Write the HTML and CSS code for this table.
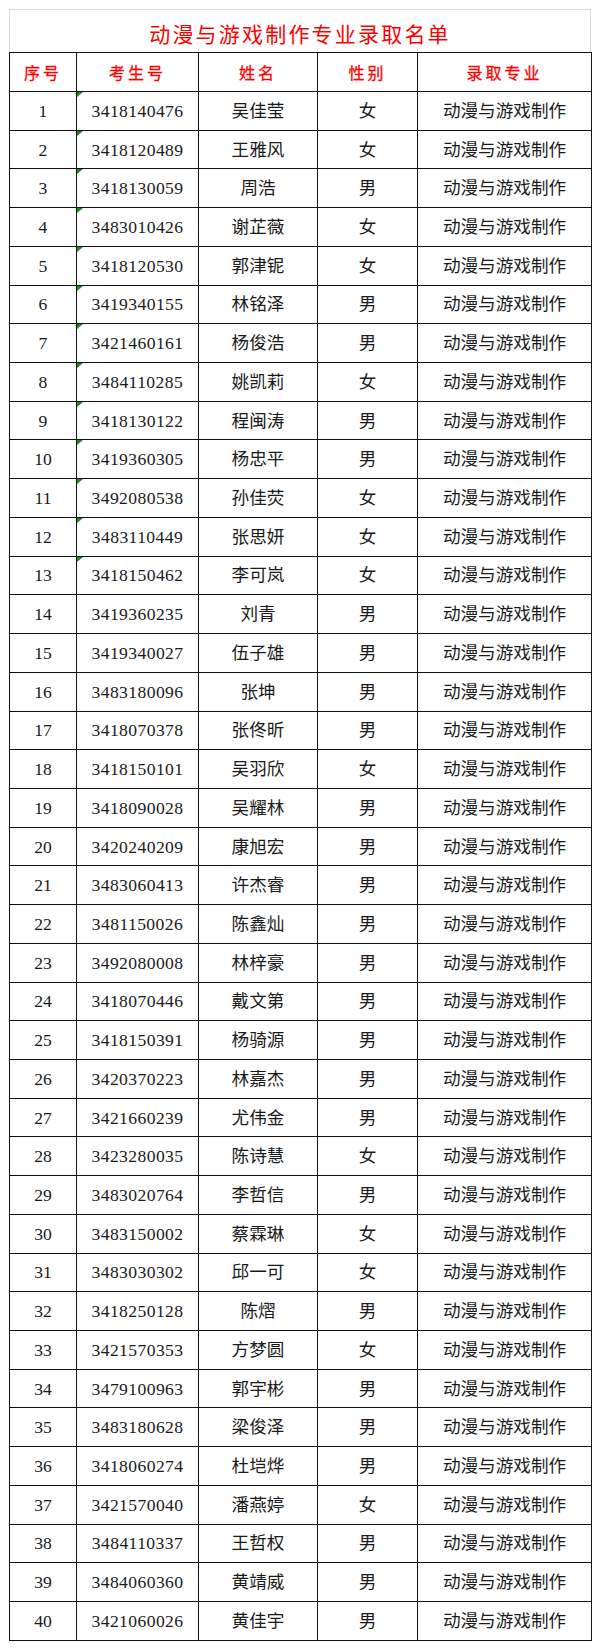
FILE: index.html
```html
<!DOCTYPE html>
<html lang="zh-CN">
<head>
<meta charset="utf-8">
<title>动漫与游戏制作专业录取名单</title>
<link rel="stylesheet" href="styles.css">
</head>
<body>
<div class="sheet">
  <div class="title">动漫与游戏制作专业录取名单</div>
  <table class="list">
    <colgroup>
      <col class="c1"><col class="c2"><col class="c3"><col class="c4"><col class="c5">
    </colgroup>
    <thead>
      <tr class="head"><th>序号</th><th>考生号</th><th>姓名</th><th>性别</th><th>录取专业</th></tr>
    </thead>
    <tbody>
      <tr><td>1</td><td class="num mark">3418140476</td><td>吴佳莹</td><td>女</td><td>动漫与游戏制作</td></tr>
      <tr><td>2</td><td class="num mark">3418120489</td><td>王雅风</td><td>女</td><td>动漫与游戏制作</td></tr>
      <tr><td>3</td><td class="num mark">3418130059</td><td>周浩</td><td>男</td><td>动漫与游戏制作</td></tr>
      <tr><td>4</td><td class="num mark">3483010426</td><td>谢芷薇</td><td>女</td><td>动漫与游戏制作</td></tr>
      <tr><td>5</td><td class="num mark">3418120530</td><td>郭津铌</td><td>女</td><td>动漫与游戏制作</td></tr>
      <tr><td>6</td><td class="num mark">3419340155</td><td>林铭泽</td><td>男</td><td>动漫与游戏制作</td></tr>
      <tr><td>7</td><td class="num mark">3421460161</td><td>杨俊浩</td><td>男</td><td>动漫与游戏制作</td></tr>
      <tr><td>8</td><td class="num mark">3484110285</td><td>姚凯莉</td><td>女</td><td>动漫与游戏制作</td></tr>
      <tr><td>9</td><td class="num mark">3418130122</td><td>程闽涛</td><td>男</td><td>动漫与游戏制作</td></tr>
      <tr><td>10</td><td class="num mark">3419360305</td><td>杨忠平</td><td>男</td><td>动漫与游戏制作</td></tr>
      <tr><td>11</td><td class="num mark">3492080538</td><td>孙佳荧</td><td>女</td><td>动漫与游戏制作</td></tr>
      <tr><td>12</td><td class="num mark">3483110449</td><td>张思妍</td><td>女</td><td>动漫与游戏制作</td></tr>
      <tr><td>13</td><td class="num mark">3418150462</td><td>李可岚</td><td>女</td><td>动漫与游戏制作</td></tr>
      <tr><td>14</td><td class="num">3419360235</td><td>刘青</td><td>男</td><td>动漫与游戏制作</td></tr>
      <tr><td>15</td><td class="num">3419340027</td><td>伍子雄</td><td>男</td><td>动漫与游戏制作</td></tr>
      <tr><td>16</td><td class="num">3483180096</td><td>张坤</td><td>男</td><td>动漫与游戏制作</td></tr>
      <tr><td>17</td><td class="num">3418070378</td><td>张佟昕</td><td>男</td><td>动漫与游戏制作</td></tr>
      <tr><td>18</td><td class="num">3418150101</td><td>吴羽欣</td><td>女</td><td>动漫与游戏制作</td></tr>
      <tr><td>19</td><td class="num">3418090028</td><td>吴耀林</td><td>男</td><td>动漫与游戏制作</td></tr>
      <tr><td>20</td><td class="num">3420240209</td><td>康旭宏</td><td>男</td><td>动漫与游戏制作</td></tr>
      <tr><td>21</td><td class="num">3483060413</td><td>许杰睿</td><td>男</td><td>动漫与游戏制作</td></tr>
      <tr><td>22</td><td class="num">3481150026</td><td>陈鑫灿</td><td>男</td><td>动漫与游戏制作</td></tr>
      <tr><td>23</td><td class="num">3492080008</td><td>林梓豪</td><td>男</td><td>动漫与游戏制作</td></tr>
      <tr><td>24</td><td class="num">3418070446</td><td>戴文第</td><td>男</td><td>动漫与游戏制作</td></tr>
      <tr><td>25</td><td class="num">3418150391</td><td>杨骑源</td><td>男</td><td>动漫与游戏制作</td></tr>
      <tr><td>26</td><td class="num">3420370223</td><td>林嘉杰</td><td>男</td><td>动漫与游戏制作</td></tr>
      <tr><td>27</td><td class="num">3421660239</td><td>尤伟金</td><td>男</td><td>动漫与游戏制作</td></tr>
      <tr><td>28</td><td class="num">3423280035</td><td>陈诗慧</td><td>女</td><td>动漫与游戏制作</td></tr>
      <tr><td>29</td><td class="num">3483020764</td><td>李哲信</td><td>男</td><td>动漫与游戏制作</td></tr>
      <tr><td>30</td><td class="num">3483150002</td><td>蔡霖琳</td><td>女</td><td>动漫与游戏制作</td></tr>
      <tr><td>31</td><td class="num">3483030302</td><td>邱一可</td><td>女</td><td>动漫与游戏制作</td></tr>
      <tr><td>32</td><td class="num">3418250128</td><td>陈熠</td><td>男</td><td>动漫与游戏制作</td></tr>
      <tr><td>33</td><td class="num">3421570353</td><td>方梦圆</td><td>女</td><td>动漫与游戏制作</td></tr>
      <tr><td>34</td><td class="num">3479100963</td><td>郭宇彬</td><td>男</td><td>动漫与游戏制作</td></tr>
      <tr><td>35</td><td class="num">3483180628</td><td>梁俊泽</td><td>男</td><td>动漫与游戏制作</td></tr>
      <tr><td>36</td><td class="num">3418060274</td><td>杜垲烨</td><td>男</td><td>动漫与游戏制作</td></tr>
      <tr><td>37</td><td class="num">3421570040</td><td>潘燕婷</td><td>女</td><td>动漫与游戏制作</td></tr>
      <tr><td>38</td><td class="num">3484110337</td><td>王哲权</td><td>男</td><td>动漫与游戏制作</td></tr>
      <tr><td>39</td><td class="num">3484060360</td><td>黄靖威</td><td>男</td><td>动漫与游戏制作</td></tr>
      <tr><td>40</td><td class="num">3421060026</td><td>黄佳宇</td><td>男</td><td>动漫与游戏制作</td></tr>
    </tbody>
  </table>
</div>
</body>
</html>
```
FILE: styles.css
```css
html, body {
  margin: 0;
  padding: 0;
  background: #fff;
}

.sheet {
  padding: 9px 0 0 9px;
  width: 582px;
  font-family: "Liberation Serif", "Noto Sans CJK SC", serif;
  color: #1a1a1a;
}

.title {
  box-sizing: border-box;
  height: 43px;
  border: 1px solid #dcdcdc;
  border-bottom: none;
  color: #f00;
  font-family: "Noto Sans CJK SC", sans-serif;
  font-size: 21px;
  letter-spacing: 2.2px;
  text-align: center;
  line-height: 46px;
}

.list {
  width: 582px;
  table-layout: fixed;
  border-collapse: collapse;
}

.c1 { width: 67px; }
.c2 { width: 122px; }
.c3 { width: 119px; }
.c4 { width: 100px; }
.c5 { width: 174px; }

.list tr {
  height: 38.72px;
}

.list tr.head {
  height: 39px;
}

.list th,
.list td {
  border: 1px solid #111;
  padding: 0;
  text-align: center;
  vertical-align: middle;
  line-height: 20px;
}

.list th {
  color: #f00;
  font-family: "Noto Sans CJK SC", sans-serif;
  font-weight: normal;
  font-size: 16px;
  letter-spacing: 3px;
  -webkit-text-stroke: 0.3px #f00;
}

.list td {
  font-size: 17.6px;
}

.list td.num {
  letter-spacing: 0.4px;
}

.list td.mark {
  position: relative;
}

.list td.mark::before {
  content: "";
  position: absolute;
  left: 0;
  top: 0;
  width: 0;
  height: 0;
  border-top: 5px solid #1e8a1e;
  border-right: 6px solid transparent;
}
```
